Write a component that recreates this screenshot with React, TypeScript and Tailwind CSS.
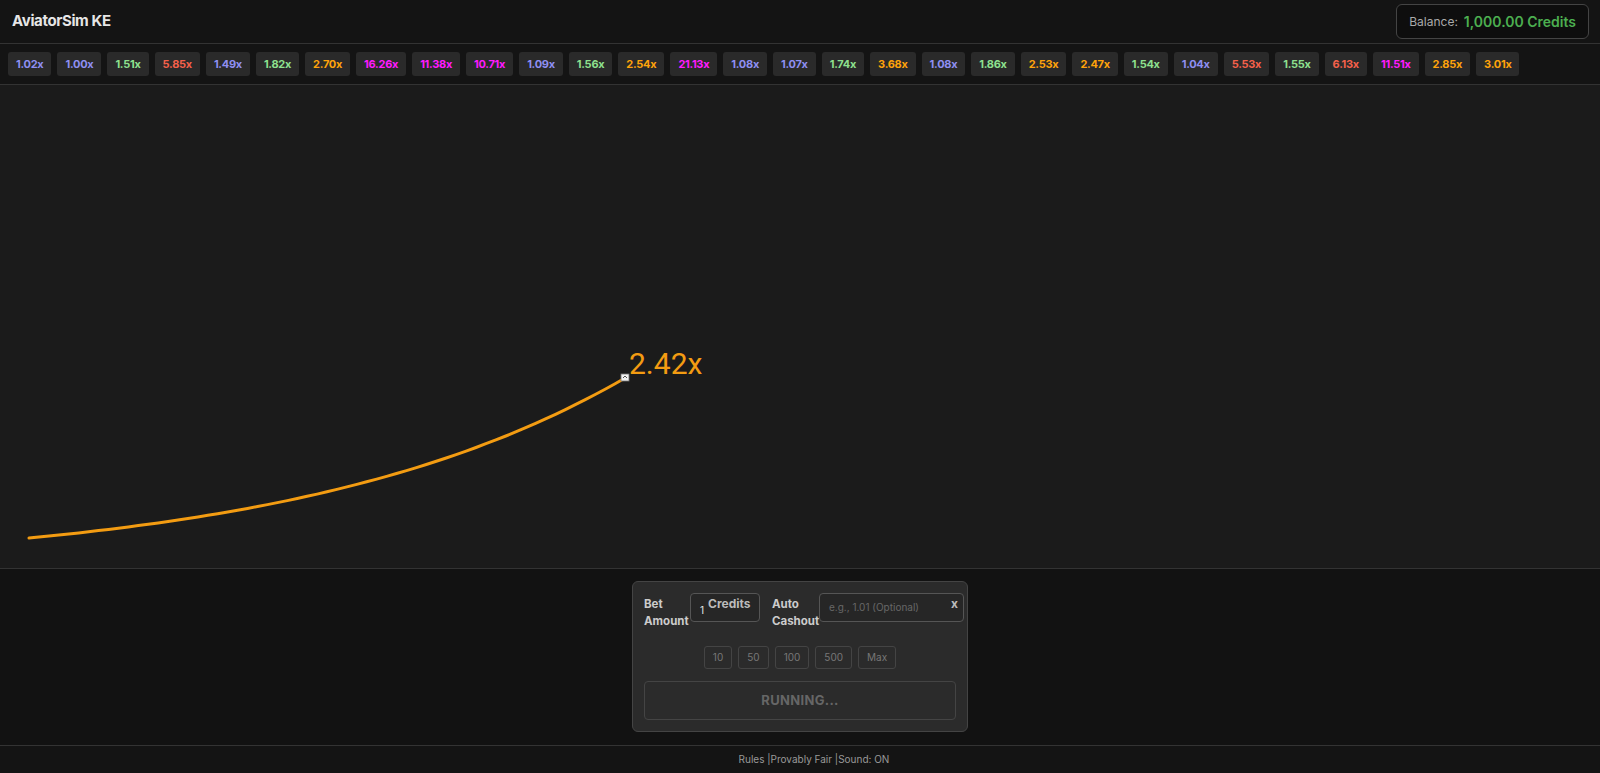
import React from "react";

const HISTORY = [
  1.02, 1.0, 1.51, 5.85, 1.49, 1.82, 2.7, 16.26, 11.38, 10.71, 1.09, 1.56, 2.54, 21.13, 1.08, 1.07, 1.74, 3.68,
  1.08, 1.86, 2.53, 2.47, 1.54, 1.04, 5.53, 1.55, 6.13, 11.51, 2.85, 3.01,
];

function chipColor(m: number) {
  if (m >= 10) return "text-[#ff1aff]";
  if (m >= 5) return "text-[#f4604a]";
  if (m >= 2) return "text-[#ffa30a]";
  if (m >= 1.5) return "text-[#8ee08e]";
  return "text-[#8f8ff2]";
}

// exponential-ish curve from the start point to the plane
function curvePoints() {
  const pts: string[] = [];
  const x0 = 29, y0 = 453, x1 = 625, y1 = 293;
  const a = 1.8;
  for (let i = 0; i <= 60; i++) {
    const t = i / 60;
    const x = x0 + (x1 - x0) * t;
    const y = y0 - (y0 - y1) * ((Math.exp(a * t) - 1) / (Math.exp(a) - 1));
    pts.push(`${x.toFixed(1)},${y.toFixed(1)}`);
  }
  return pts.join(" ");
}

export default function App() {
  return (
    <div className="h-screen w-full flex flex-col bg-[#141414] text-[#ddd] font-['Inter',sans-serif] overflow-hidden">
      {/* Header */}
      <header className="h-[44px] shrink-0 flex items-center justify-between pl-3 pr-[11px] border-b border-[#333]">
        <h1 className="text-[15px] font-bold text-[#e6e6e6] tracking-tight">AviatorSim KE</h1>
        <div className="h-[35px] flex items-center gap-[6px] px-3 rounded-md border border-[#444] bg-[#0e0e0e]">
          <span className="text-[12px] text-[#aaa]">Balance:</span>
          <span className="text-[14px] font-semibold text-[#4caf50]">1,000.00 Credits</span>
        </div>
      </header>

      {/* History */}
      <div className="h-[41px] shrink-0 flex items-center gap-[6px] px-2 border-b border-[#333] bg-[#141414]">
        {HISTORY.map((m, i) => (
          <div
            key={i}
            className={`h-[24px] px-[8px] flex items-center rounded-[3px] bg-[#2a2a2a] text-[11px] font-bold tracking-tight ${chipColor(m)}`}
          >
            {m.toFixed(2)}x
          </div>
        ))}
      </div>

      {/* Chart */}
      <div className="relative flex-1 bg-[#1b1b1b] border-b border-[#333]">
        <svg className="absolute inset-0 w-full h-full">
          <polyline points={curvePoints()} fill="none" stroke="#f39c12" strokeWidth="3" strokeLinecap="round" />
          <rect x="621" y="289" width="8" height="7" fill="#f2f2f2" stroke="#777" strokeWidth="0.8" />
          <path d="M623 293 l2 -2 l2 2" stroke="#555" strokeWidth="1" fill="none" />
        </svg>
        <div className="absolute left-[629px] top-[264px] text-[30px] leading-none text-[#f39c12] font-['Roboto',sans-serif]">
          2.42x
        </div>
      </div>

      {/* Controls */}
      <div className="shrink-0 flex justify-center pt-[12px] pb-[13px] bg-[#121212]">
        <div className="w-[336px] h-[151px] rounded-md border border-[#444] bg-[#2b2b2b] px-[11px] pt-[11px] flex flex-col">
          <div className="flex items-start">
            <label className="shrink-0 w-[46px] pt-[3px] text-[11.5px] leading-[17px] font-bold text-[#ccc]">
              Bet Amount
            </label>
            <div className="shrink-0 w-[70px] h-[29px] flex items-start rounded-[4px] border border-[#555] bg-[#262626] pl-[9px] gap-[4px]">
              <span className="mt-[9px] text-[10px] text-[#e5e5e5]">1</span>
              <span className="mt-[1px] text-[12px] font-bold text-[#bbb]">Credits</span>
            </div>
            <label className="shrink-0 ml-[12px] w-[47px] pt-[3px] text-[11.5px] leading-[17px] font-bold text-[#ccc]">
              Auto Cashout
            </label>
            <div className="shrink-0 w-[145px] h-[29px] flex items-center justify-between rounded-[4px] border border-[#555] bg-[#262626] pl-[9px] pr-[5px]">
              <span className="text-[10px] text-[#666]">e.g., 1.01 (Optional)</span>
              <span className="text-[12px] font-bold text-[#bbb] -mt-[8px]">x</span>
            </div>
          </div>

          <div className="mt-[16px] flex justify-center gap-[6px]">
            {["10", "50", "100", "500", "Max"].map((v) => (
              <button
                key={v}
                className="h-[23px] px-[8px] rounded-[3px] border border-[#444] text-[10px] text-[#777]"
              >
                {v}
              </button>
            ))}
          </div>

          <button className="mt-[12px] h-[39px] w-full rounded-[4px] border border-[#444] bg-[#2b2b2b] text-[13px] font-bold tracking-wide text-[#666]">
            RUNNING...
          </button>
        </div>
      </div>

      {/* Footer */}
      <footer className="h-[28px] shrink-0 flex items-center justify-center pl-[28px] border-t border-[#333] bg-[#141414] text-[10px] text-[#999]">
        Rules |Provably Fair |Sound: ON
      </footer>
    </div>
  );
}
